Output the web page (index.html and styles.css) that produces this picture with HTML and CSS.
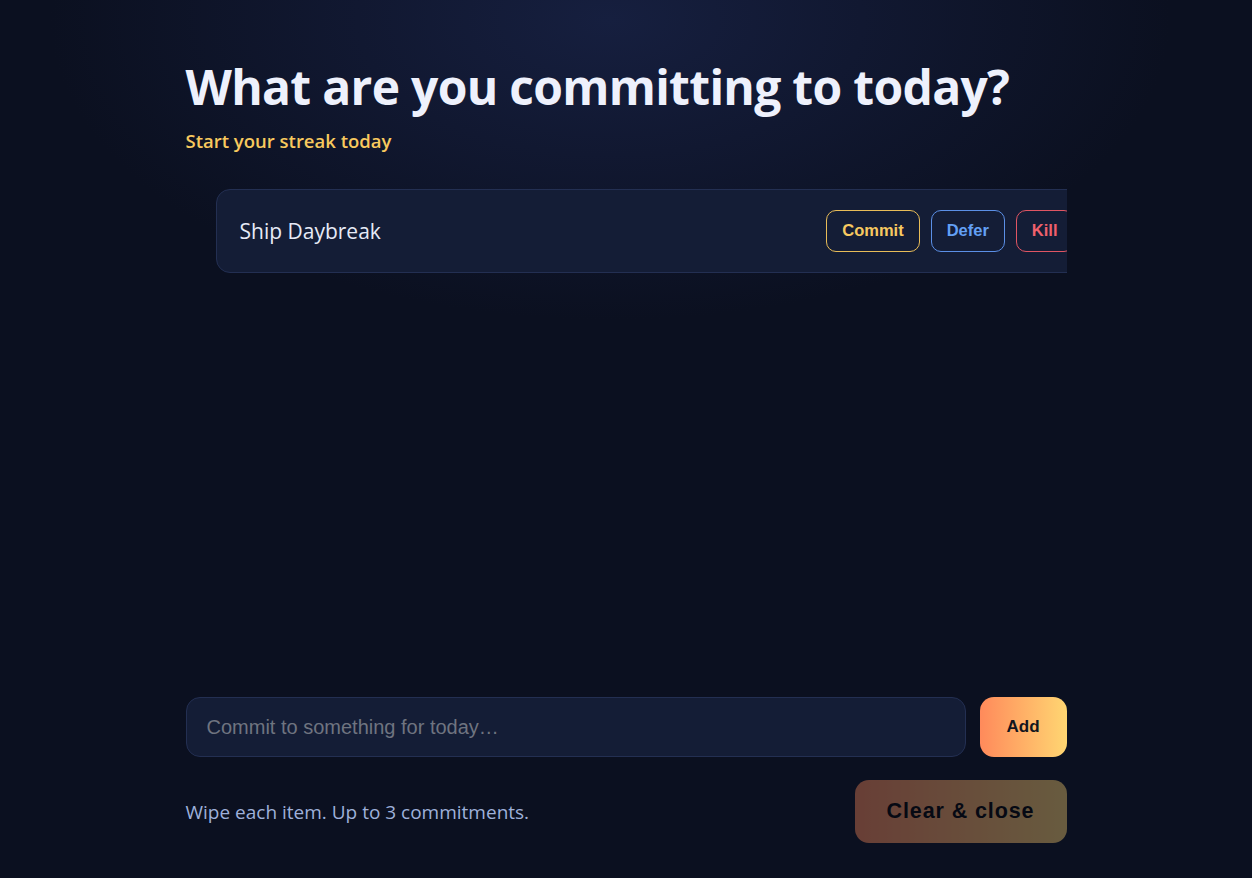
FILE: index.html
```html
<!DOCTYPE html>
<html lang="en">
<head>
<meta charset="utf-8">
<title>Commitments</title>
<link rel="stylesheet" href="styles.css">
</head>
<body>
<main class="app">
  <header class="head">
    <h1 class="title">What are you committing to today?</h1>
    <p class="sub">Start your streak today</p>
  </header>
  <section class="list">
    <div class="item">
      <span class="item-text">Ship Daybreak</span>
      <div class="actions">
        <button class="act act-commit">Commit</button>
        <button class="act act-defer">Defer</button>
        <button class="act act-kill">Kill</button>
      </div>
    </div>
  </section>
  <form class="add-row">
    <input class="add-input" type="text" placeholder="Commit to something for today…">
    <button type="button" class="add-btn">Add</button>
  </form>
  <footer class="foot">
    <span class="hint">Wipe each item. Up to 3 commitments.</span>
    <button class="clear-btn">Clear &amp; close</button>
  </footer>
</main>
</body>
</html>
```
FILE: styles.css
```css
* { box-sizing: border-box; }
html, body { margin: 0; height: 100%; }
body {
  background: radial-gradient(ellipse 560px 300px at 610px 20px, #161f3f 0%, #111831 45%, #0b1020 100%), #0b1020;
  background-color: #0b1020;
  font-family: "Open Sans", "Noto Sans", sans-serif;
  color: #e8ecf8;
}
.app {
  width: 881px;
  margin: 0 auto;
  height: 878px;
  display: flex;
  flex-direction: column;
  padding: 58px 0 35px;
}
.title {
  margin: 0;
  font-size: 48px;
  font-weight: 700;
  line-height: 1.2;
  color: #eef1fc;
  letter-spacing: -0.7px;
}
.sub {
  margin: 12px 0 0;
  font-size: 18.5px;
  font-weight: 600;
  color: #f8c95e;
}
.list {
  flex: 1;
  overflow: hidden;
  padding-top: 36px;
}
.item {
  transform: translateX(30px);
  height: 84px;
  display: flex;
  align-items: center;
  justify-content: space-between;
  padding: 0 0 0 23px;
  background: #141d36;
  border: 1px solid #232f52;
  border-radius: 14px;
}
.item-text {
  font-size: 21px;
  color: #e6eaf7;
}
.actions {
  display: flex;
  gap: 11px;
  padding-right: 22px;
}
.act {
  height: 42px;
  padding: 0 15px;
  border-radius: 10px;
  background: transparent;
  font-family: "Liberation Sans", Arial, sans-serif;
  font-size: 16.5px;
  font-weight: 700;
  cursor: pointer;
}
.act-commit { color: #f7c960; border: 1px solid #e8bc58; }
.act-defer { color: #63a0f5; border: 1px solid #5b8fe6; }
.act-kill { color: #f0606c; border: 1px solid #e05563; }
.add-row {
  display: flex;
  gap: 14px;
  margin: 0;
}
.add-input {
  flex: 1;
  height: 60px;
  padding: 0 20px;
  background: #141d36;
  border: 1px solid #232f52;
  border-radius: 14px;
  font-family: "Liberation Sans", Arial, sans-serif;
  font-size: 20px;
  color: #e6eaf7;
  outline: none;
}
.add-input::placeholder { color: #6f7480; }
.add-btn {
  width: 87px;
  height: 60px;
  border: none;
  border-radius: 14px;
  background: linear-gradient(90deg, #ff8a5b, #ffd672);
  font-family: "Liberation Sans", Arial, sans-serif;
  font-size: 17px;
  font-weight: 700;
  color: #12161f;
}
.foot {
  display: flex;
  justify-content: space-between;
  align-items: center;
  margin-top: 23px;
}
.hint {
  font-size: 19px;
  color: #9eb0da;
}
.clear-btn {
  width: 212px;
  height: 63px;
  border: none;
  border-radius: 14px;
  background: linear-gradient(90deg, #ff8a5b, #ffd672);
  opacity: 0.38;
  font-family: "Liberation Sans", Arial, sans-serif;
  font-size: 21.5px;
  font-weight: 700;
  letter-spacing: 0.9px;
  color: #000;
}
```
